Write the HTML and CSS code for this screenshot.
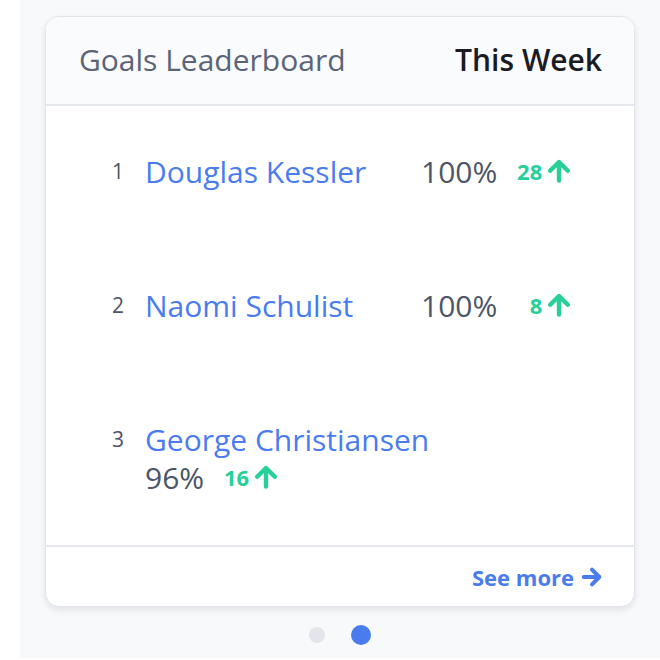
FILE: index.html
```html
<!DOCTYPE html>
<html>
<head>
<meta charset="utf-8">
<link rel="stylesheet" href="styles.css">
</head>
<body>
<div class="panel">
  <div class="card">
    <div class="card-header">
      <span class="title">Goals Leaderboard</span>
      <span class="period">This Week</span>
    </div>
    <ol class="board">
      <li class="entry">
        <span class="rank">1</span>
        <div class="info">
          <a class="name">Douglas Kessler</a>
          <div class="stats">
            <span class="pct">100%</span>
            <span class="delta">28<svg class="up" viewBox="0 0 24 24"><path d="M12 21.5V4M3.2 11.8L12 3l8.8 8.8" fill="none" stroke="currentColor" stroke-width="4.4" stroke-linecap="round" stroke-linejoin="round"/></svg></span>
          </div>
        </div>
      </li>
      <li class="entry">
        <span class="rank">2</span>
        <div class="info">
          <a class="name">Naomi Schulist</a>
          <div class="stats">
            <span class="pct">100%</span>
            <span class="delta">8<svg class="up" viewBox="0 0 24 24"><path d="M12 21.5V4M3.2 11.8L12 3l8.8 8.8" fill="none" stroke="currentColor" stroke-width="4.4" stroke-linecap="round" stroke-linejoin="round"/></svg></span>
          </div>
        </div>
      </li>
      <li class="entry stacked">
        <span class="rank">3</span>
        <div class="info">
          <a class="name">George Christiansen</a>
          <div class="stats">
            <span class="pct">96%</span>
            <span class="delta">16<svg class="up" viewBox="0 0 24 24"><path d="M12 21.5V4M3.2 11.8L12 3l8.8 8.8" fill="none" stroke="currentColor" stroke-width="4.4" stroke-linecap="round" stroke-linejoin="round"/></svg></span>
          </div>
        </div>
      </li>
    </ol>
    <div class="card-footer">
      <a class="more">See more<svg class="right" viewBox="0 0 24 24"><path d="M3 12h16M12 4l8 8-8 8" fill="none" stroke="currentColor" stroke-width="4.4" stroke-linecap="round" stroke-linejoin="round"/></svg></a>
    </div>
  </div>
  <div class="dots">
    <span class="dot"></span>
    <span class="dot active"></span>
  </div>
</div>
</body>
</html>
```
FILE: styles.css
```css
* { box-sizing: border-box; }
html, body { margin: 0; padding: 0; background: #ffffff; }
body { font-family: "Open Sans", "Lato", sans-serif; }

.panel {
  margin-left: 20px;
  height: 658px;
  background: #f8f9fb;
  padding: 16px 25px 0 25px;
}

.card {
  width: 590px;
  height: 591px;
  background: #ffffff;
  border: 1px solid #e1e5ea;
  border-radius: 14px;
  box-shadow: 0 3px 6px rgba(30, 40, 60, 0.10);
  display: flex;
  flex-direction: column;
  overflow: hidden;
}

.card-header {
  height: 89px;
  flex: 0 0 auto;
  background: #fafbfc;
  border-bottom: 2px solid #e4e8ed;
  display: flex;
  align-items: center;
  justify-content: space-between;
  padding: 0 32px 3px 33px;
}
.title { font-size: 30px; color: #5b6478; }
.period { font-size: 30px; font-weight: 600; color: #1b1b26; }

.board {
  list-style: none;
  margin: 0;
  padding: 46px 0 0 66px;
  height: 439px;
  flex: 0 0 auto;
  display: flex;
  flex-direction: column;
  gap: 96px;
}
.entry {
  display: flex;
  align-items: flex-start;
}
.rank {
  width: 33px;
  height: 38px;
  display: flex;
  align-items: center;
  font-size: 21px;
  color: #4d5566;
}
.info {
  display: flex;
  width: 425px;
}
.stacked .info { flex-direction: column; }
.name {
  min-width: 276px;
  height: 38px;
  display: flex;
  align-items: center;
  font-size: 30px;
  color: #4a7cf0;
}
.stats { display: flex; align-items: center; height: 38px; }
.pct { font-size: 30px; color: #4d5566; }
.delta {
  min-width: 74px;
  display: inline-flex;
  align-items: center;
  justify-content: flex-end;
  gap: 5px;
  font-size: 22px;
  font-weight: 700;
  color: #27cf99;
}
.up { width: 24px; height: 24px; }

.card-footer {
  flex: 1 1 auto;
  border-top: 2px solid #e4e8ed;
  display: flex;
  align-items: center;
  justify-content: flex-end;
  padding: 0 31px;
}
.more {
  display: inline-flex;
  align-items: center;
  gap: 7px;
  font-size: 22px;
  font-weight: 700;
  color: #4a7cf0;
}
.right { width: 22px; height: 22px; }

.dots {
  display: flex;
  justify-content: center;
  align-items: center;
  gap: 26px;
  margin-top: 18px;
}
.dot { width: 16px; height: 16px; border-radius: 50%; background: #e2e5ea; }
.dot.active { width: 20px; height: 20px; background: #4a7cf0; }
```
